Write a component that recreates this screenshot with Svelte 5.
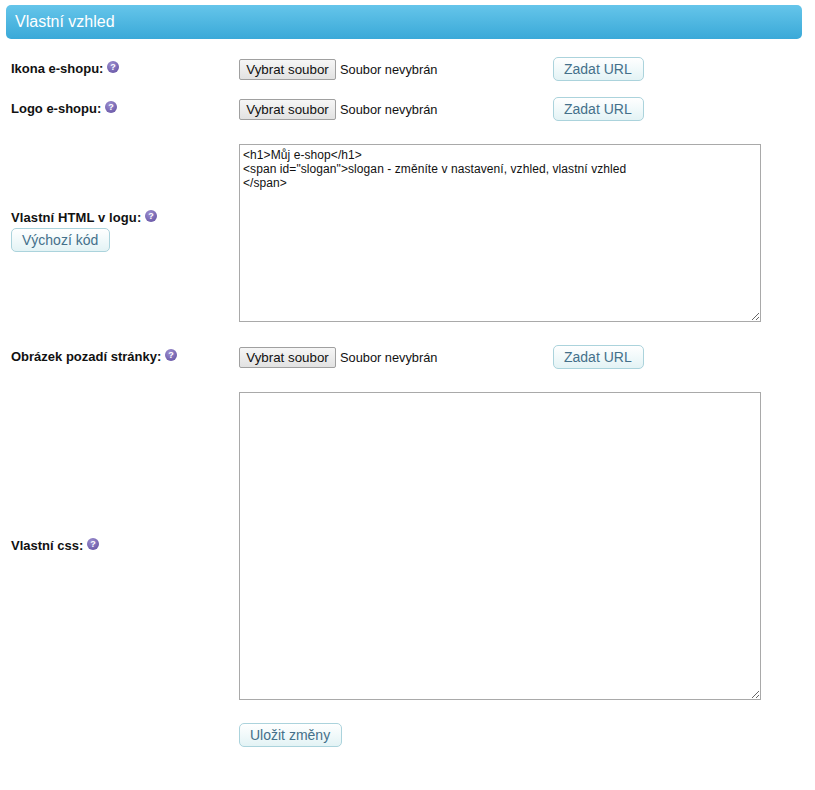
<script lang="ts">
    const defaultHtml = `<h1>Můj e-shop</h1>
<span id="slogan">slogan - změníte v nastavení, vzhled, vlastní vzhled
</span>`;
</script>

<div class="page">
    <h2 class="title">Vlastní vzhled</h2>

    <form class="form" onsubmit={(e) => e.preventDefault()}>
        <div class="row">
            <div class="label"><strong>Ikona e-shopu:</strong> <span class="help">?</span></div>
            <div class="field">
                <div class="file">
                    <button type="button" class="file-btn">Vybrat soubor</button>
                    <span>Soubor nevybrán</span>
                </div>
                <button type="button" class="btn">Zadat URL</button>
            </div>
        </div>

        <div class="row">
            <div class="label"><strong>Logo e-shopu:</strong> <span class="help">?</span></div>
            <div class="field">
                <div class="file">
                    <button type="button" class="file-btn">Vybrat soubor</button>
                    <span>Soubor nevybrán</span>
                </div>
                <button type="button" class="btn">Zadat URL</button>
            </div>
        </div>

        <div class="row spaced">
            <div class="label html-label">
                <div><strong>Vlastní HTML v logu:</strong> <span class="help">?</span></div>
                <button type="button" class="btn default-code">Výchozí kód</button>
            </div>
            <textarea class="html-area" value={defaultHtml}></textarea>
        </div>

        <div class="row">
            <div class="label"><strong>Obrázek pozadí stránky:</strong> <span class="help">?</span></div>
            <div class="field">
                <div class="file">
                    <button type="button" class="file-btn">Vybrat soubor</button>
                    <span>Soubor nevybrán</span>
                </div>
                <button type="button" class="btn">Zadat URL</button>
            </div>
        </div>

        <div class="row spaced">
            <div class="label"><strong>Vlastní css:</strong> <span class="help">?</span></div>
            <textarea class="css-area"></textarea>
        </div>

        <div class="row actions">
            <div class="label"></div>
            <button type="submit" class="btn">Uložit změny</button>
        </div>
    </form>
</div>

<style>
    :global(body) {
        background: #fff;
        color: #111;
        font-family: "Liberation Sans", Arial, sans-serif;
        font-size: 13px;
    }

    .page {
        width: 796px;
        padding: 5px 0 0 6px;
    }

    .title {
        margin: 0;
        height: 34px;
        padding-left: 9px;
        line-height: 34px;
        font-size: 16px;
        font-weight: normal;
        color: #fff;
        background: linear-gradient(to bottom, #65c5ea, #3aa9d8);
        border-radius: 5px;
    }

    .form {
        margin-top: 10px;
        padding-left: 5px;
    }

    .row {
        display: flex;
        align-items: center;
        min-height: 40px;
    }

    .spaced {
        padding: 15px 0;
    }

    .actions {
        align-items: flex-start;
        min-height: 0;
        padding-top: 8px;
    }

    .label {
        flex: 0 0 228px;
        line-height: 16px;
    }

    .html-label {
        margin-bottom: 4px;
    }

    .html-label strong {
        letter-spacing: 0.1px;
    }

    .label strong {
        font-weight: bold;
    }

    .help {
        display: inline-block;
        width: 12px;
        height: 12px;
        border-radius: 50%;
        background: radial-gradient(circle at 40% 30%, #9c8fd0, #5f4c9e);
        color: #fff;
        font-size: 9px;
        font-weight: bold;
        line-height: 12px;
        text-align: center;
        vertical-align: 3px;
    }

    .field {
        display: flex;
        align-items: center;
    }

    .file {
        display: flex;
        align-items: center;
        gap: 4px;
        width: 314px;
        font-size: 12.8px;
    }

    .file span {
        padding-top: 1px;
    }

    .file-btn {
        width: 97px;
        height: 21px;
        padding: 0;
        border: 1px solid #a0a0a0;
        border-radius: 2px;
        background: linear-gradient(to bottom, #f6f6f6, #e2e2e2);
        color: #111;
        font-family: inherit;
        font-size: 13.33px;
    }

    .btn {
        height: 24px;
        padding: 0 11px 0 10px;
        border: 1px solid #abd3dc;
        border-radius: 5px;
        background: linear-gradient(to bottom, #ffffff, #e3f3f5);
        color: #44708a;
        font-family: inherit;
        font-size: 14px;
    }

    .default-code {
        display: block;
        margin-top: 2px;
    }

    textarea {
        box-sizing: border-box;
        display: block;
        width: 522px;
        margin: 0;
        padding: 3px;
        border: 1px solid #a9a9a9;
        background: #fff;
        color: #111;
        font-family: "Liberation Sans", Arial, sans-serif;
        font-size: 12px;
        line-height: 14px;
        letter-spacing: 0.08px;
    }

    .html-area {
        height: 178px;
    }

    .css-area {
        height: 308px;
    }
</style>
